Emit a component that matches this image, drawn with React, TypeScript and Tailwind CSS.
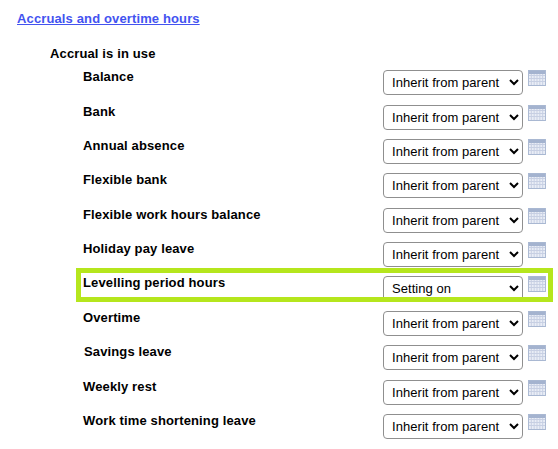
const rows = [
  ["Balance", "Inherit from parent", ""],
  ["Bank", "Inherit from parent", ""],
  ["Annual absence", "Inherit from parent", ""],
  ["Flexible bank", "Inherit from parent", ""],
  ["Flexible work hours balance", "Inherit from parent", ""],
  ["Holiday pay leave", "Inherit from parent", ""],
  ["Levelling period hours", "Setting on", ""],
  ["Overtime", "Inherit from parent", ""],
  ["Savings leave", "Inherit from parent", "ml-px"],
  ["Weekly rest", "Inherit from parent", ""],
  ["Work time shortening leave", "Inherit from parent", ""],
];

function CalendarIcon() {
  const xs = [3.5, 6.5, 9.5, 12.5, 15.5];
  const ys = [5.5, 8.5, 11.5];
  return (
    <svg width="18" height="16" viewBox="0 0 19 16" preserveAspectRatio="none" className="shrink-0">
      <rect x="0.5" y="0.5" width="18" height="15" fill="#e9edf6" stroke="#a9b8d2" />
      <rect x="1" y="1" width="17" height="3" fill="#a4b3cf" />
      {xs.map((x) => (
        <line key={x} x1={x} y1="4" x2={x} y2="15" stroke="#c6cfe2" />
      ))}
      {ys.map((y) => (
        <line key={y} x1="1" y1={y} x2="18" y2={y} stroke="#c6cfe2" />
      ))}
    </svg>
  );
}

export default function App() {
  return (
    <div className="relative h-[449px] w-[558px] overflow-hidden bg-white font-['Liberation_Sans',Arial,sans-serif] text-black">
      <div className="pl-[17px] pt-[6px]">
        <a href="#" className="text-[13px] font-bold leading-[15px] text-[#4353f0] underline tracking-[0.13px]">
          Accruals and overtime hours
        </a>
      </div>
      <div className="pl-[50px] pt-[16px] text-[13px] font-bold leading-[15px] tracking-[0.13px]">Accrual is in use</div>
      <div className="flex flex-col pt-[8.3px]">
        {rows.map(([label, value, extra]) => (
          <div key={label} className="flex h-[34.37px] items-start pl-[83px]">
            <span className={`flex-1 text-[13px] font-bold leading-[15px] tracking-[0.13px] ${extra}`}>{label}</span>
            <select
              defaultValue={value}
              className="mt-[1px] h-[25px] w-[140px] rounded-[4px] border border-[#8f8f8f] bg-white pl-[4px] text-[13px] tracking-[0.05px] text-black"
            >
              <option>{value}</option>
            </select>
            <div className="ml-[5px] mr-[12px] mt-[1px]">
              <CalendarIcon />
            </div>
          </div>
        ))}
      </div>
      <div className="absolute left-[76px] top-[268px] h-[34px] w-[477px] border-[5px] border-[#b5e61d]" />
    </div>
  );
}
